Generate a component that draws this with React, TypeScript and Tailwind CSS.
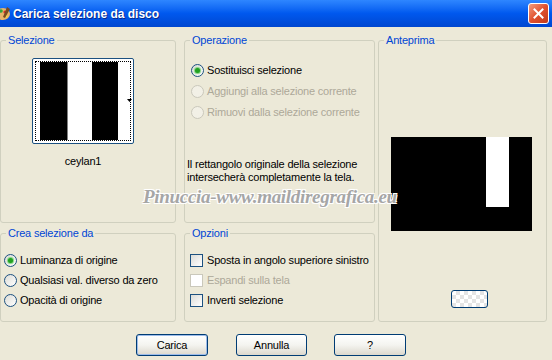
import type { ReactNode } from "react";

function Radio({ checked, disabled }: { checked?: boolean; disabled?: boolean }) {
  return (
    <span
      className={
        disabled
          ? "flex h-[13px] w-[13px] shrink-0 items-center justify-center rounded-full border border-[#CAC8BB] bg-[#F2F0E6]"
          : "flex h-[13px] w-[13px] shrink-0 items-center justify-center rounded-full border border-[#1C5180] bg-gradient-to-br from-[#DCDCD7] to-white"
      }
    >
      {checked && (
        <span className="h-[5px] w-[5px] rounded-full bg-[#21A121] shadow-[0_0_1px_1px_#7ED37E]" />
      )}
    </span>
  );
}

function Check({ disabled }: { disabled?: boolean }) {
  return (
    <span
      className={
        disabled
          ? "h-[13px] w-[13px] shrink-0 border border-[#CAC8BB] bg-white"
          : "h-[13px] w-[13px] shrink-0 border border-[#1C5180] bg-gradient-to-br from-[#DCDCD7] to-white"
      }
    />
  );
}

function Group({
  label,
  className,
  children,
}: {
  label: string;
  className: string;
  children?: ReactNode;
}) {
  return (
    <fieldset className={"rounded-[3px] border border-[#D0D0BF] " + className}>
      <legend className="ml-[5px] px-[2px] leading-[13px] text-[#0046D5]">{label}</legend>
      {children}
    </fieldset>
  );
}

function XpButton({
  children,
  isDefault,
  className,
}: {
  children?: ReactNode;
  isDefault?: boolean;
  className: string;
}) {
  return (
    <div
      className={
        "flex items-center justify-center rounded-[3px] border border-[#003C74] bg-gradient-to-b from-white via-[#F4F4F0] to-[#DCD8CD] " +
        (isDefault ? "shadow-[inset_0_0_0_1px_#9DBCEA] " : "") +
        className
      }
    >
      {children}
    </div>
  );
}

export default function App() {
  return (
    <div
      className="relative h-[360px] w-[552px] overflow-hidden bg-[#ECE9D8] text-[11px] tracking-[-0.2px] text-black"
      style={{ fontFamily: '"Liberation Sans", Arial, sans-serif' }}
    >
      {/* title bar */}
      <div className="flex h-[27px] items-center bg-gradient-to-b from-[#2E86FF] via-[#0058EE] to-[#0047D0]">
        <svg width="11" height="15" viewBox="0 0 11 15" className="ml-0 shrink-0">
          <ellipse cx="3" cy="8" rx="7" ry="6" fill="#E8B46A" />
          <circle cx="1" cy="5" r="1.8" fill="#2FA53A" />
          <circle cx="5" cy="6" r="1.6" fill="#D8322A" />
          <circle cx="6" cy="10" r="1.5" fill="#F4E04A" />
          <path d="M7 1 L10 3 L5 12 L3 11 Z" fill="#7A4A20" />
        </svg>
        <span className="ml-[2px] text-[12px] font-bold tracking-normal text-white [text-shadow:1px_1px_0_#0A2A8A]">
          Carica selezione da disco
        </span>
        <div className="ml-auto mr-[3px] flex h-[21px] w-[21px] items-center justify-center rounded-[3px] border border-white bg-gradient-to-br from-[#F09A7C] via-[#E0502E] to-[#C23A18]">
          <svg width="11" height="11" viewBox="0 0 11 11">
            <path d="M1.5 1.5 L9.5 9.5 M9.5 1.5 L1.5 9.5" stroke="white" strokeWidth="2" strokeLinecap="square" />
          </svg>
        </div>
      </div>

      <div className="flex pt-[7px]">
        {/* left column */}
        <div className="flex w-[176px] flex-col">
          <Group label="Selezione" className="h-[189px]">
            <div className="ml-[31px] mt-[11px] flex w-[102px] flex-col items-center">
              <div className="relative h-[86px] w-[102px] rounded-[2px] border border-[#1C5180] bg-white p-[2px]">
                <div className="flex h-full border border-dotted border-black pl-[4px]">
                  <div className="w-[27px] bg-black" />
                  <div className="w-[1px] bg-[#808080]" />
                  <div className="w-[24px] bg-white" />
                  <div className="w-[26px] bg-black" />
                </div>
                <svg width="5" height="3" viewBox="0 0 5 3" className="absolute left-[94px] top-[40px]">
                  <path d="M0 0 H5 L2.5 3 Z" fill="black" />
                </svg>
              </div>
              <div className="mt-[11px] leading-[13px]">ceylan1</div>
            </div>
          </Group>
          <Group label="Crea selezione da" className="mt-[4px] h-[95px]">
            <div className="mt-[10px] flex flex-col pl-[3px]">
              <div className="flex h-[20px] items-center gap-[3px]">
                <Radio checked />
                <span>Luminanza di origine</span>
              </div>
              <div className="flex h-[20px] items-center gap-[3px]">
                <Radio />
                <span>Qualsiasi val. diverso da zero</span>
              </div>
              <div className="flex h-[20px] items-center gap-[3px]">
                <Radio />
                <span>Opacità di origine</span>
              </div>
            </div>
          </Group>
        </div>

        {/* middle column */}
        <div className="ml-[8px] flex w-[191px] flex-col">
          <Group label="Operazione" className="h-[189px]">
            <div className="mt-[13px] flex flex-col pl-[6px]">
              <div className="flex h-[21px] items-center gap-[3px]">
                <Radio checked />
                <span>Sostituisci selezione</span>
              </div>
              <div className="flex h-[21px] items-center gap-[3px] text-[#ACA899]">
                <Radio disabled />
                <span>Aggiungi alla selezione corrente</span>
              </div>
              <div className="flex h-[21px] items-center gap-[3px] text-[#ACA899]">
                <Radio disabled />
                <span>Rimuovi dalla selezione corrente</span>
              </div>
            </div>
            <p className="mt-[35px] pl-[2px] leading-[13px]">
              Il rettangolo originale della selezione
              <br />
              intersecherà completamente la tela.
            </p>
          </Group>
          <Group label="Opzioni" className="mt-[4px] h-[95px]">
            <div className="mt-[10px] flex flex-col pl-[5px]">
              <div className="flex h-[20px] items-center gap-[4px]">
                <Check />
                <span>Sposta in angolo superiore sinistro</span>
              </div>
              <div className="flex h-[20px] items-center gap-[4px] text-[#ACA899]">
                <Check disabled />
                <span>Espandi sulla tela</span>
              </div>
              <div className="flex h-[20px] items-center gap-[4px]">
                <Check />
                <span>Inverti selezione</span>
              </div>
            </div>
          </Group>
        </div>

        {/* right column */}
        <div className="ml-[3px] w-[169px]">
          <Group label="Anteprima" className="h-[288px]">
            <div className="ml-[12px] mt-[90px] flex h-[94px] w-[141px] bg-black pl-[95px]">
              <div className="h-[70px] w-[23px] bg-white" />
            </div>
            <XpButton className="ml-[72px] mt-[59px] h-[18px] w-[37px] bg-[repeating-conic-gradient(#E4E4E4_0_25%,#FFFFFF_0_50%)] bg-[length:8px_8px]" />
          </Group>
        </div>
      </div>

      {/* buttons */}
      <div className="mt-[12px] flex pl-[136px]">
        <XpButton isDefault className="h-[22px] w-[72px]">
          Carica
        </XpButton>
        <XpButton className="ml-[28px] h-[22px] w-[71px]">Annulla</XpButton>
        <XpButton className="ml-[27px] h-[22px] w-[72px]">?</XpButton>
      </div>

      {/* watermark */}
      <div
        className="pointer-events-none absolute left-[143px] top-[183px] text-[19px] font-bold italic tracking-[-0.3px] text-[#A6A6A6] [text-shadow:1px_1px_0_#fff,-1px_-1px_0_#fff,1px_-1px_0_#fff,-1px_1px_0_#fff]"
        style={{ fontFamily: '"Liberation Serif", serif' }}
      >
        Pinuccia-www.maildiregrafica.eu
      </div>
    </div>
  );
}
